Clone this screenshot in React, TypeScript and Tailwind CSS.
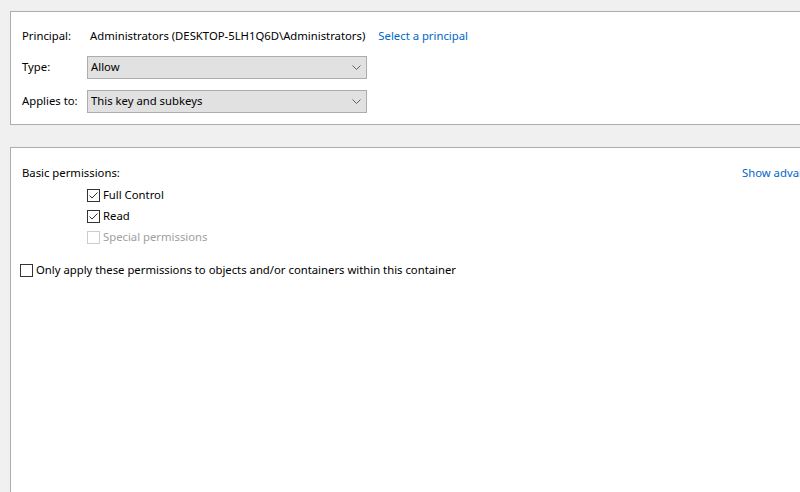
import React from 'react';

const font = { fontFamily: '"Noto Sans", "Segoe UI", sans-serif' };

const Chevron = () => (
    <svg width="9" height="5" viewBox="0 0 9 5" className="text-[#606060]">
        <path d="M0.5 0.5 L4.5 4.5 L8.5 0.5" fill="none" stroke="currentColor" strokeWidth="1" />
    </svg>
);

const Dropdown: React.FC<{ value: string }> = ({ value }) => (
    <div className="flex items-center justify-between w-[280px] h-[23px] bg-[#e1e1e1] border border-[#adadad] pl-[3px] pr-[5px]">
        <span>{value}</span>
        <Chevron />
    </div>
);

const Checkbox: React.FC<{ checked?: boolean; disabled?: boolean; label: string }> = ({ checked, disabled, label }) => (
    <div className={`flex items-center gap-[3px] h-[21px] ${disabled ? 'text-[#a0a0a0]' : 'text-black'}`}>
        <div className={`w-[13px] h-[13px] bg-white border flex items-center justify-center ${disabled ? 'border-[#cccccc]' : 'border-[#333333]'}`}>
            {checked && (
                <svg width="11" height="11" viewBox="0 0 11 11">
                    <path d="M1.5 5.5 L4 8 L9.5 2.5" fill="none" stroke="#333333" strokeWidth="1" />
                </svg>
            )}
        </div>
        <span>{label}</span>
    </div>
);

const App: React.FC = () => {
    return (
        <div className="h-[492px] w-[800px] overflow-hidden bg-[#f0f0f0] flex flex-col pt-[11px] pl-[10px] text-[11.3px] text-black" style={font}>
            <section className="h-[114px] shrink-0 bg-white border border-r-0 border-[#adadad] pl-[11px] pt-[13px]">
                <div className="flex items-center h-[23px]">
                    <span className="w-[65px]">Principal:</span>
                    <span className="pl-[3px]">Administrators (DESKTOP-5LH1Q6D\Administrators)</span>
                    <span className="ml-[13px] text-[#0066cc]">Select a principal</span>
                </div>
                <div className="flex items-center mt-[8px]">
                    <span className="w-[65px]">Type:</span>
                    <Dropdown value="Allow" />
                </div>
                <div className="flex items-center mt-[11px]">
                    <span className="w-[65px]">Applies to:</span>
                    <Dropdown value="This key and subkeys" />
                </div>
            </section>

            <section className="flex-1 mt-[22px] bg-white border-l border-t border-[#adadad] pt-[15px] pl-[11px]">
                <div className="flex items-center justify-between h-[20px]">
                    <span>Basic permissions:</span>
                    <span className="text-[#0066cc] whitespace-nowrap w-[58px] overflow-hidden">Show advanced permissions</span>
                </div>
                <div className="pl-[65px] mt-[2px]">
                    <Checkbox checked label="Full Control" />
                    <Checkbox checked label="Read" />
                    <Checkbox disabled label="Special permissions" />
                </div>
                <div className="-ml-[2px] mt-[12px]">
                    <Checkbox label="Only apply these permissions to objects and/or containers within this container" />
                </div>
            </section>
        </div>
    );
};

export default App;
